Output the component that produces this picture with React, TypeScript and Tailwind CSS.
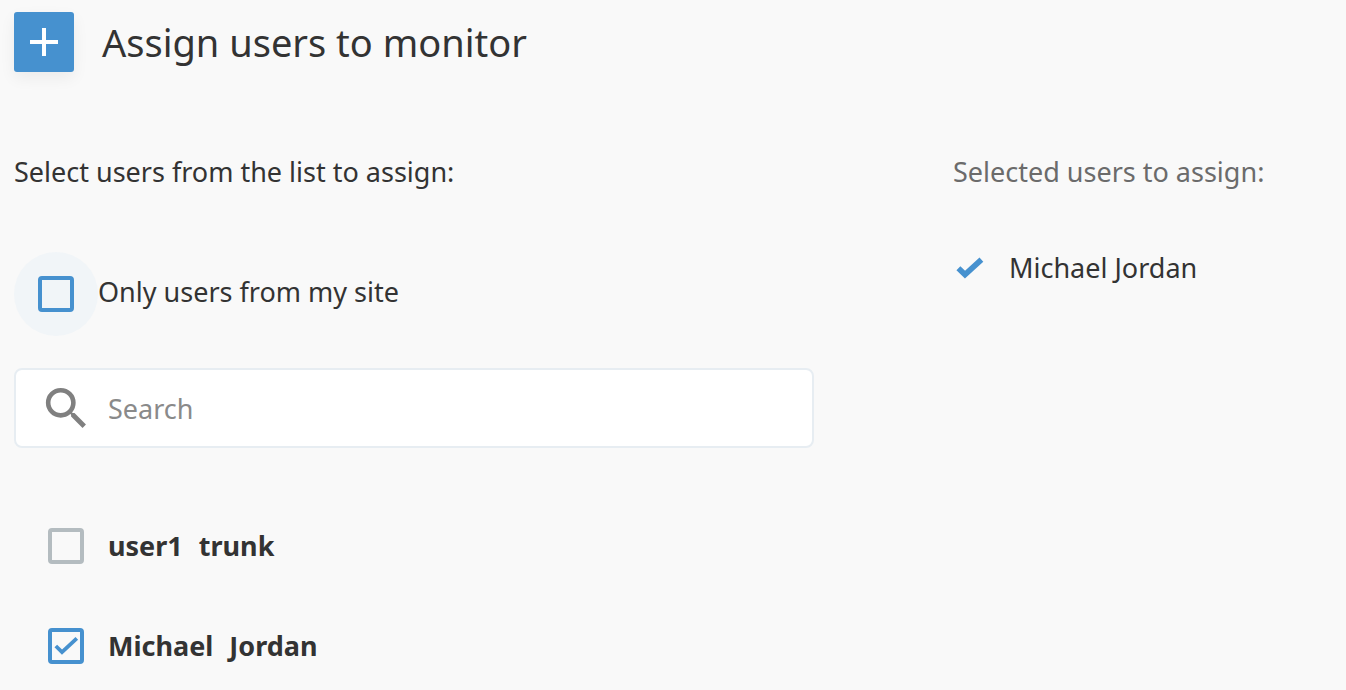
import { useState } from "react";

const users = [
  { id: "user1", first: "user1", last: "trunk" },
  { id: "mjordan", first: "Michael", last: "Jordan" },
];

function Checkbox({
  id,
  checked,
  onChange,
  focused = false,
}: {
  id: string;
  checked: boolean;
  onChange: () => void;
  focused?: boolean;
}) {
  return (
    <span className="grid size-9 shrink-0 place-items-center">
      <input
        id={id}
        type="checkbox"
        checked={checked}
        onChange={onChange}
        className={
          "col-start-1 row-start-1 size-9 appearance-none rounded-[4px] border-4 outline-none checked:border-[#4691cf] " +
          (focused ? "border-[#4691cf]" : "border-[#b4bcc0]")
        }
      />
      {checked && (
        <svg
          viewBox="0 0 36 36"
          className="pointer-events-none col-start-1 row-start-1 size-9"
          fill="none"
          stroke="#4691cf"
          strokeWidth="3.8"
          aria-hidden="true"
        >
          <path d="M7.8 18 L14 24.2 L28.8 10.4" />
        </svg>
      )}
    </span>
  );
}

export default function App() {
  const [mySite, setMySite] = useState(false);
  const [query, setQuery] = useState("");
  const [selected, setSelected] = useState<string[]>(["mjordan"]);

  const toggle = (id: string) =>
    setSelected((s) => (s.includes(id) ? s.filter((x) => x !== id) : [...s, id]));
  const visible = users.filter((u) =>
    (u.first + " " + u.last).toLowerCase().includes(query.toLowerCase()),
  );

  return (
    <main className="min-h-screen bg-[#f9f9f9] px-3.5 pt-3 pb-6 font-['Noto_Sans',sans-serif] text-[27px] leading-10 text-[#333]">
      <header className="flex items-center gap-7">
        <button
          type="button"
          aria-label="Add"
          className="grid size-15 shrink-0 place-items-center rounded-[3px] bg-[#4691cf] shadow-[0_6px_16px_rgba(0,0,0,0.06)]"
        >
          <svg viewBox="0 0 28 28" className="size-7" stroke="#fff" strokeWidth="4" aria-hidden="true">
            <path d="M14 0V28M0 14H28" />
          </svg>
        </button>
        <h1 className="text-[38px] leading-[60px]">Assign users to monitor</h1>
      </header>

      <div className="mt-20 grid grid-cols-[800fr_379fr] gap-x-[139px]">
        <section>
          <h2>Select users from the list to assign:</h2>
          <div className="mt-15 flex h-[84px] items-center">
            <span className="grid size-[84px] shrink-0 place-items-center rounded-full bg-[#f1f5f8]">
              <Checkbox id="my-site" checked={mySite} onChange={() => setMySite(!mySite)} focused />
            </span>
            <label htmlFor="my-site" className="pb-1">
              Only users from my site
            </label>
          </div>
          <label className="mt-8 flex h-20 items-center rounded-lg border-2 border-[#e7edf2] bg-white pl-[23px]">
            <svg viewBox="0 0 24 24" className="size-[55px] shrink-0" fill="#808080" aria-hidden="true">
              <path d="M15.5 14h-.79l-.28-.27A6.471 6.471 0 0 0 16 9.5 6.5 6.5 0 1 0 9.5 16c1.61 0 3.09-.59 4.23-1.57l.27.28v.79l5 4.99L20.49 19l-4.99-5zm-6 0C7.01 14 5 11.99 5 9.5S7.01 5 9.5 5 14 7.01 14 9.5 11.99 14 9.5 14z" />
            </svg>
            <input
              type="text"
              aria-label="Search"
              placeholder="Search"
              value={query}
              onChange={(e) => setQuery(e.target.value)}
              className="ml-[14px] h-full min-w-0 flex-1 bg-transparent outline-none placeholder:text-[#8a8a8a]"
            />
          </label>
          <ul className="mt-20 flex flex-col gap-16 pl-[34px]">
            {visible.map((u) => (
              <li key={u.id} className="flex h-9 items-center gap-6">
                <Checkbox id={u.id} checked={selected.includes(u.id)} onChange={() => toggle(u.id)} />
                <label htmlFor={u.id} className="flex gap-4 font-bold">
                  <span>{u.first}</span>
                  <span>{u.last}</span>
                </label>
              </li>
            ))}
          </ul>
        </section>

        <section>
          <h2 className="text-[#6b6b6b]">Selected users to assign:</h2>
          <ul className="mt-14 flex flex-col gap-4">
            {users
              .filter((u) => selected.includes(u.id))
              .map((u) => (
                <li key={u.id} className="flex items-center gap-6">
                  <svg
                    viewBox="0 0 32 24"
                    className="h-6 w-8 shrink-0"
                    fill="none"
                    stroke="#4691cf"
                    strokeWidth="5.6"
                    aria-hidden="true"
                  >
                    <path d="M5.4 12.2 L12 18.6 L28.4 3.6" />
                  </svg>
                  <span>
                    {u.first} {u.last}
                  </span>
                </li>
              ))}
          </ul>
        </section>
      </div>
    </main>
  );
}
